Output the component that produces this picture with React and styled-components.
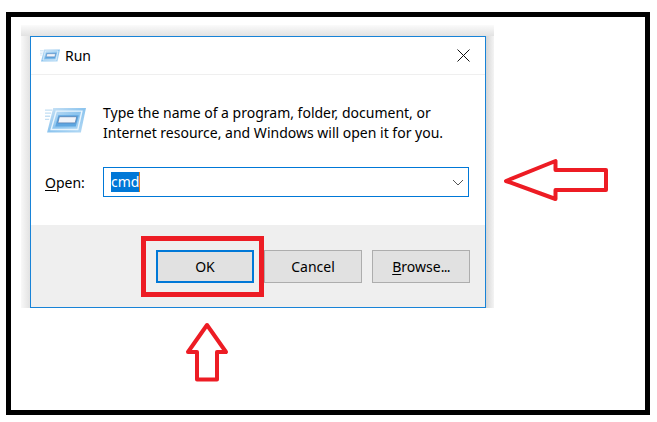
import React from 'react';
import styled, { createGlobalStyle } from 'styled-components';

const GlobalStyle = createGlobalStyle`
  html, body {
    margin: 0;
    padding: 0;
    background: #fff;
  }
  body {
    font-family: "Noto Sans", "Open Sans", sans-serif;
    color: #000;
  }
`;

const Frame = styled.div`
  position: relative;
  box-sizing: border-box;
  width: 644px;
  height: 403px;
  margin: 12px 0 0 6px;
  border: 5px solid #000;
`;

// the window shadow as captured: soft bands cut off flat at the crop edges
const ShadowClip = styled.div`
  box-sizing: border-box;
  width: 473px;
  height: 283px;
  margin-left: 10px;
  margin-top: 8px;
  padding: 11px 8px 0 9px;
  overflow: hidden;
  background:
    linear-gradient(to bottom, #fbfbfb, #e2e2e2) top / 100% 11px no-repeat,
    linear-gradient(to right, #f8f8f8, #e2e2e2) left / 9px 100% no-repeat,
    linear-gradient(to left, #f4f4f4, #d6d6d6) right / 8px 100% no-repeat;
`;

const Dialog = styled.div`
  box-sizing: border-box;
  width: 456px;
  height: 272px;
  display: flex;
  flex-direction: column;
  background: #fff;
  border: 1px solid #1883d7;
`;

const TitleBar = styled.div`
  box-sizing: border-box;
  height: 38px;
  display: flex;
  align-items: center;
  gap: 5px;
  padding: 0 15px 0 9px;
  border-bottom: 1px solid #efefef;
  font-size: 14px;
`;

const Title = styled.span`
  flex: 1;
`;

const Body = styled.div`
  flex: 1;
  display: flex;
  flex-direction: column;
  padding: 21px 16px 0 14px;
`;

const Intro = styled.div`
  display: flex;
  gap: 17px;
`;

const IconSlot = styled.div`
  margin-top: 11px;
`;

const IntroText = styled.p`
  margin: 7px 0 0;
  font-size: 14px;
  line-height: 20px;
`;

const OpenRow = styled.div`
  display: flex;
  align-items: center;
  gap: 18px;
  margin-top: 24px;
  font-size: 14px;
`;

const OpenLabel = styled.label`
  width: 40px;
`;

const Combo = styled.div`
  box-sizing: border-box;
  width: 366px;
  height: 30px;
  display: flex;
  align-items: center;
  justify-content: space-between;
  padding: 0 4px 0 7px;
  border: 1px solid #0078d7;
`;

const Selected = styled.span`
  background: #0078d7;
  color: #fff;
  line-height: 20px;
  border-right: 1px solid #e8801c;
`;

const Footer = styled.div`
  box-sizing: border-box;
  height: 82px;
  display: flex;
  justify-content: flex-end;
  gap: 10px;
  padding: 25px 15px 0 0;
  background: #efefef;
`;

const Button = styled.button`
  box-sizing: border-box;
  width: 98px;
  height: 33px;
  margin: 0;
  padding: 0;
  background: #e1e1e1;
  border: ${(p) => (p.$primary ? '2px solid #0078d7' : '1px solid #adadad')};
  font-family: inherit;
  font-size: 14px;
  color: #000;
`;

const Underline = styled.span`
  text-decoration: underline;
  text-underline-offset: 2px;
`;

const Dots = styled.span`
  letter-spacing: -0.7px;
`;

const Highlight = styled.div`
  position: absolute;
  left: 130px;
  top: 219px;
  box-sizing: border-box;
  width: 123px;
  height: 61px;
  border: 5px solid #ed1c24;
`;

const Arrow = styled.svg`
  position: absolute;
  left: ${(p) => p.$left}px;
  top: ${(p) => p.$top}px;
`;

const RunIcon = ({ size }) => (
  <svg width={size} height={size * 0.65} viewBox="0 0 40 26" style={{ display: 'block' }}>
    <defs>
      <linearGradient id={`run${size}`} x1="0" y1="0" x2="1" y2="1">
        <stop offset="0" stopColor="#cfe5f6" />
        <stop offset="0.5" stopColor="#8cc4ee" />
        <stop offset="1" stopColor="#b7dbf5" />
      </linearGradient>
    </defs>
    <path d="M8 1H40L35 25H2Z" fill={`url(#run${size})`} />
    <path d="M11 4H36L32 22H6Z" fill="none" stroke="#eaf5fd" strokeWidth="1.4" />
    <path d="M13 8H33L30 19H10Z" fill="#5fa6e0" />
    <path d="M14 9.5H31L29.5 15.5H12.5Z" fill="#f1f4fa" stroke="#4f78ab" strokeWidth="0.7" />
    <path d="M0 3H7M0 6H6M0 9H5M0 12H4" stroke="#c4dff3" strokeWidth="1.3" />
  </svg>
);

export default function App() {
  return (
    <>
      <GlobalStyle />
      <Frame>
        <ShadowClip>
          <Dialog>
            <TitleBar>
              <RunIcon size={20} />
              <Title>Run</Title>
              <svg width="13" height="13" viewBox="0 0 13 13">
                <path d="M0.5 0.5L12.5 12.5M12.5 0.5L0.5 12.5" stroke="#111" strokeWidth="1" fill="none" />
              </svg>
            </TitleBar>
            <Body>
              <Intro>
                <IconSlot>
                  <RunIcon size={41} />
                </IconSlot>
                <IntroText>
                  Type the name of a program, folder, document, or
                  <br />
                  Internet resource, and Windows will open it for you.
                </IntroText>
              </Intro>
              <OpenRow>
                <OpenLabel>
                  <Underline>O</Underline>pen:
                </OpenLabel>
                <Combo>
                  <Selected>cmd</Selected>
                  <svg width="12" height="7" viewBox="0 0 12 7">
                    <path d="M1 1L6 6L11 1" stroke="#555" strokeWidth="1" fill="none" />
                  </svg>
                </Combo>
              </OpenRow>
            </Body>
            <Footer>
              <Button $primary>OK</Button>
              <Button>Cancel</Button>
              <Button>
                <Underline>B</Underline>rowse<Dots>...</Dots>
              </Button>
            </Footer>
          </Dialog>
        </ShadowClip>
        <Highlight />
        <Arrow $left={491} $top={140} width="108" height="48" viewBox="0 0 108 48">
          <path d="M4 24L53.5 4V13H104V33H53.5V42Z" fill="#fff" stroke="#ed1c24" strokeWidth="4" strokeLinejoin="round" />
        </Arrow>
        <Arrow $left={173} $top={304} width="46" height="62" viewBox="0 0 46 62">
          <path d="M23 4L42 31H33V58.5H13V31H4Z" fill="#fff" stroke="#ed1c24" strokeWidth="4" strokeLinejoin="round" />
        </Arrow>
      </Frame>
    </>
  );
}
